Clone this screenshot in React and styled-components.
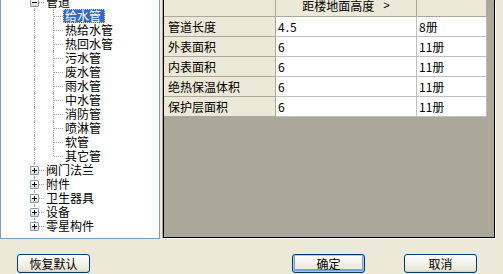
import React from 'react'
import styled, { createGlobalStyle, css } from 'styled-components'

const GlobalStyle = createGlobalStyle`
    html, body {
        margin: 0;
        padding: 0;
        background: #ece9d8;
        overflow: hidden;
    }
    body {
        font-family: "Noto Sans CJK SC", "Noto Sans", sans-serif;
        font-size: 12px;
        color: #000;
    }
`

const Window = styled.div`
    width: 503px;
    height: 274px;
    display: flex;
    flex-direction: column;
    background: #ece9d8;
    overflow: hidden;
`

const Main = styled.div`
    display: flex;
    align-items: flex-start;
    gap: 3px;
    height: 239px;
`

// ---- tree ----

const TreePanel = styled.div`
    width: 160px;
    height: 239px;
    box-sizing: border-box;
    background: #fff;
    border: 1px solid #7f9db9;
    border-top: none;
    overflow: hidden;
`

const TreeList = styled.ul`
    list-style: none;
    margin: -5px 0 0;
    padding: 0 0 0 24px;
`

const TreeRow = styled.li`
    display: flex;
    align-items: center;
    height: 14px;
`

const Connector = styled.span`
    position: relative;
    flex-shrink: 0;
    width: 19px;
    height: 14px;

    &::before {
        content: '';
        position: absolute;
        left: 9px;
        top: 0;
        height: ${p => (p.$kind === 'elbow' ? '7px' : '14px')};
        border-left: 1px dotted #a0a0a0;
    }

    ${p => p.$kind !== 'pipe' && css`
        &::after {
            content: '';
            position: absolute;
            left: 10px;
            top: 7px;
            width: 9px;
            border-top: 1px dotted #a0a0a0;
        }
    `}
`

const Expander = styled.span`
    position: absolute;
    z-index: 1;
    left: 5px;
    top: 3px;
    width: 9px;
    height: 9px;
    box-sizing: border-box;
    border: 1px solid #7f9db9;
    border-radius: 1px;
    background: linear-gradient(#fff 30%, #d8d4c8);

    &::before {
        content: '';
        position: absolute;
        left: 1px;
        top: 3px;
        width: 5px;
        height: 1px;
        background: #000;
    }

    ${p => !p.$open && css`
        &::after {
            content: '';
            position: absolute;
            left: 3px;
            top: 1px;
            width: 1px;
            height: 5px;
            background: #000;
        }
    `}
`

const NodeLabel = styled.span`
    display: inline-block;
    padding: 0 3px 0 1px;
    line-height: 12px;
    border: 1px solid transparent;
    white-space: nowrap;

    ${p => p.$selected && css`
        background: #316ac5;
        color: #fff;
        border: 1px dotted #e8cf7a;
    `}
`

// ---- grid ----

const GridPanel = styled.div`
    width: 332px;
    height: 238px;
    box-sizing: border-box;
    background: #aca899;
    border: 1px solid #000;
    border-top: none;
    box-shadow: -1px 0 0 #aca899, 1px 1px 0 #fff;
    overflow: hidden;
`

const HeaderRow = styled.div`
    display: flex;
    height: 23px;
    margin-top: -6px;
`

const GridRow = styled.div`
    display: flex;
    height: 20px;
`

const HeadCell = styled.div`
    width: ${p => p.$w}px;
    box-sizing: border-box;
    display: flex;
    align-items: center;
    justify-content: center;
    background: #ece9d8;
    border-right: 1px solid #aca899;
    border-bottom: 1px solid #aca899;
    white-space: nowrap;
`

const SortMark = styled.span`
    margin-left: 9px;
    font-family: "Liberation Sans", sans-serif;
    font-size: 11px;
`

const RowHead = styled.div`
    width: 112px;
    box-sizing: border-box;
    display: flex;
    align-items: center;
    padding-left: 4px;
    background: #ece9d8;
    border-right: 1px solid #aca899;
    border-bottom: 1px solid #aca899;
    white-space: nowrap;
`

const DataCell = styled.div`
    width: ${p => p.$w}px;
    box-sizing: border-box;
    display: flex;
    align-items: center;
    padding-left: 2px;
    background: #fff;
    border-right: 1px solid #c0c0c0;
    border-bottom: 1px solid #c0c0c0;
    white-space: nowrap;
    letter-spacing: ${p => (p.$spaced ? '1px' : '0')};
`

// ---- footer ----

const Footer = styled.div`
    display: flex;
    padding: 15px 26px 0 17px;
`

const ActionGroup = styled.div`
    display: flex;
    gap: 39px;
    margin-left: auto;
`

const Button = styled.button`
    width: 73px;
    height: 19px;
    padding: 0;
    box-sizing: border-box;
    font-family: "Noto Sans CJK SC", sans-serif;
    font-size: 12px;
    line-height: 17px;
    color: #000;
    border: 1px solid #003c74;
    border-radius: 3px;
    background: linear-gradient(#fff, #f4f3ee 40%, #ece9d8 85%, #d6d0c5);
    ${p => p.$primary && css`
        box-shadow: inset 0 0 0 1px #a9c6f2, inset 0 -1px 0 2px #7ba2e7;
    `}
`

const children = ['给水管', '热给水管', '热回水管', '污水管', '废水管', '雨水管', '中水管', '消防管', '喷淋管', '软管', '其它管']
const roots = ['阀门法兰', '附件', '卫生器具', '设备', '零星构件']

const rows = [
    { name: '管道长度', value: '4.5', book: '8册' },
    { name: '外表面积', value: '6', book: '11册' },
    { name: '内表面积', value: '6', book: '11册' },
    { name: '绝热保温体积', value: '6', book: '11册' },
    { name: '保护层面积', value: '6', book: '11册' },
]

const App = () => (
    <Window>
        <GlobalStyle />
        <Main>
            <TreePanel>
                <TreeList>
                    <TreeRow>
                        <Connector $kind="tee"><Expander $open /></Connector>
                        <NodeLabel>管道</NodeLabel>
                    </TreeRow>
                    {children.map((c, i) => (
                        <TreeRow key={c}>
                            <Connector $kind="pipe" />
                            <Connector $kind={i === children.length - 1 ? 'elbow' : 'tee'} />
                            <NodeLabel $selected={i === 0}>{c}</NodeLabel>
                        </TreeRow>
                    ))}
                    {roots.map((r, i) => (
                        <TreeRow key={r}>
                            <Connector $kind={i === roots.length - 1 ? 'elbow' : 'tee'}><Expander /></Connector>
                            <NodeLabel>{r}</NodeLabel>
                        </TreeRow>
                    ))}
                </TreeList>
            </TreePanel>
            <GridPanel>
                <HeaderRow>
                    <HeadCell $w={112} />
                    <HeadCell $w={141}>距楼地面高度<SortMark>&gt;</SortMark></HeadCell>
                    <HeadCell $w={70} />
                </HeaderRow>
                {rows.map(r => (
                    <GridRow key={r.name}>
                        <RowHead>{r.name}</RowHead>
                        <DataCell $w={141} $spaced>{r.value}</DataCell>
                        <DataCell $w={70}>{r.book}</DataCell>
                    </GridRow>
                ))}
            </GridPanel>
        </Main>
        <Footer>
            <Button>恢复默认</Button>
            <ActionGroup>
                <Button $primary>确定</Button>
                <Button>取消</Button>
            </ActionGroup>
        </Footer>
    </Window>
)

export default App
